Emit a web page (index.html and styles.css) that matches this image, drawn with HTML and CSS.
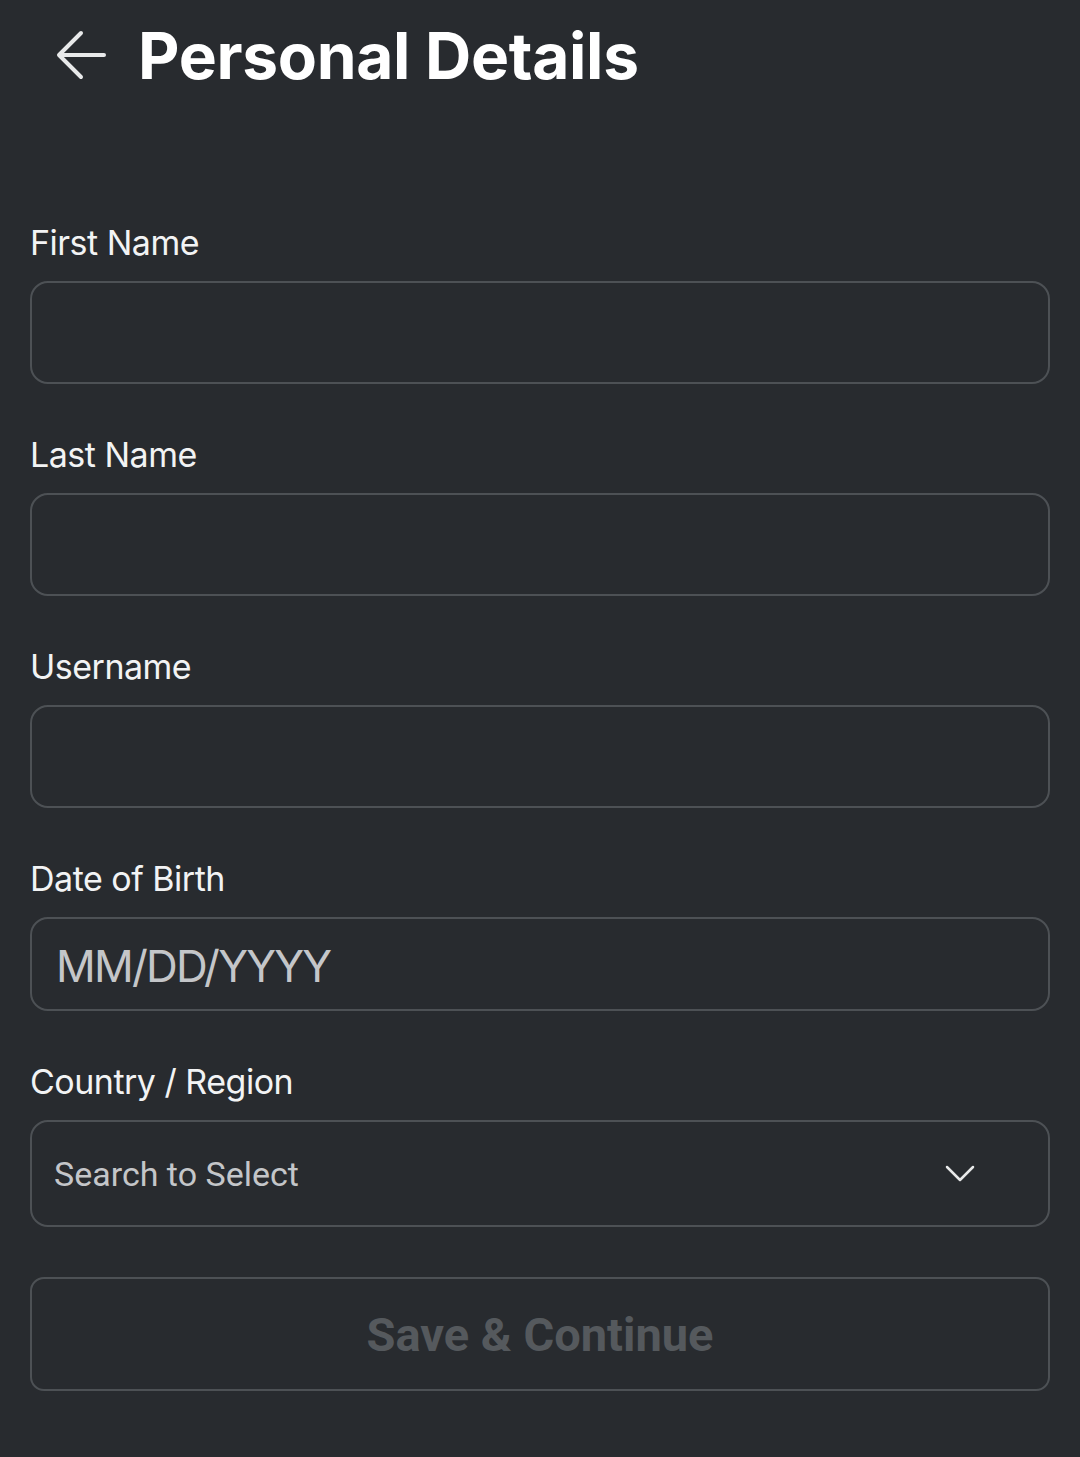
FILE: index.html
```html
<!DOCTYPE html>
<html lang="en">
<head>
  <meta charset="UTF-8">
  <meta name="viewport" content="width=device-width, initial-scale=1.0">
  <title>Personal Details</title>
  <link rel="stylesheet" href="styles.css">
</head>
<body>
  <div class="page">
    <div class="header">
      <button class="back" aria-label="Back">
        <svg width="54" height="54" viewBox="0 0 54 54" fill="none" stroke="#e8e9ea" stroke-width="4" stroke-linecap="round" stroke-linejoin="round">
          <path d="M50 27H6"/>
          <path d="M27 5L5 27l22 22"/>
        </svg>
      </button>
      <h1 class="title">Personal Details</h1>
    </div>

    <form class="form" onsubmit="return false">
      <div class="field">
        <label class="label" for="firstName">First Name</label>
        <input class="box" id="firstName" type="text">
      </div>
      <div class="field">
        <label class="label" for="lastName">Last Name</label>
        <input class="box" id="lastName" type="text">
      </div>
      <div class="field">
        <label class="label" for="username">Username</label>
        <input class="box" id="username" type="text">
      </div>
      <div class="field">
        <label class="label" for="dob">Date of Birth</label>
        <input class="box box-date" id="dob" type="text" placeholder="MM/DD/YYYY">
      </div>
      <div class="field">
        <label class="label" for="country">Country / Region</label>
        <div class="box box-select">
          <input id="country" type="text" placeholder="Search to Select">
          <svg width="32" height="20" viewBox="0 0 32 20" fill="none" stroke="#e8e9ea" stroke-width="2.5" stroke-linecap="round" stroke-linejoin="round">
            <path d="M3 3l13 13L29 3"/>
          </svg>
        </div>
      </div>
      <button class="save" type="submit" disabled>Save &amp; Continue</button>
    </form>
  </div>
</body>
</html>
```

FILE: styles.css
```css
html, body{
  margin: 0;
  background-color: #282b2f;
}
body{
  font-family: Inter, "Noto Sans", sans-serif;
  color: #f2f3f4;
}
.page{
  padding: 0 30px;
}
.header{
  display: flex;
  align-items: center;
  gap: 30px;
  height: 110px;
  padding-left: 24px;
}
.back{
  display: flex;
  padding: 0;
  border: none;
  background: transparent;
}
.title{
  margin: 0;
  font-size: 64px;
  font-weight: 700;
  letter-spacing: -0.3px;
  color: #fff;
}
.form{
  display: flex;
  flex-direction: column;
  gap: 51px;
  padding-top: 113px;
}
.field{
  display: flex;
  flex-direction: column;
  gap: 18px;
}
.label{
  font-size: 34px;
  line-height: 40px;
  letter-spacing: -0.5px;
  color: #f2f3f4;
}
.box{
  box-sizing: border-box;
  width: 100%;
  height: 103px;
  margin: 0;
  border: 2px solid #4d5155;
  border-radius: 18px;
  background: transparent;
  color: #f2f3f4;
  outline: none;
}
.box-date{
  height: 94px;
  padding: 4px 24px 0;
  font-family: Inter, sans-serif;
  font-size: 44px;
  letter-spacing: -1.8px;
}
.box-date::placeholder{
  color: #c4c6c9;
}
.box-select{
  display: flex;
  align-items: center;
  height: 107px;
  padding: 0 72px 0 22px;
}
.box-select input{
  flex: 1;
  border: none;
  background: transparent;
  outline: none;
  font-family: Roboto, sans-serif;
  font-size: 34px;
  color: #f2f3f4;
  padding: 0;
}
.box-select input::placeholder{
  color: #c4c6c9;
}
.save{
  height: 114px;
  margin-top: -1px;
  border: 2px solid #4d5155;
  border-radius: 14px;
  background: transparent;
  font-family: Roboto, sans-serif;
  font-size: 47px;
  font-weight: 700;
  letter-spacing: 0;
  color: #55595d;
}
```
